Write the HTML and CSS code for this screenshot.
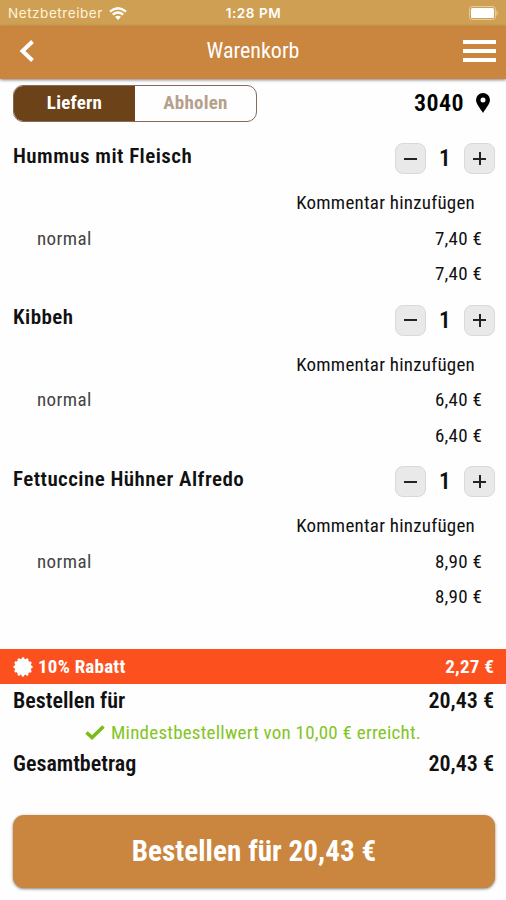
FILE: index.html
```html
<!DOCTYPE html>
<html lang="de">
<head>
    <meta charset="UTF-8">
    <title>Warenkorb</title>
    <link rel="stylesheet" href="styles.css">
</head>
<body>
    <!-- Status bar -->
    <div class="status-bar">
        <div class="carrier">
            <span>Netzbetreiber</span>
            <svg class="wifi" viewBox="0 0 18 13">
                <path d="M1 4.6 Q9 -2 17 4.6" />
                <path d="M3.8 7.6 Q9 3.4 14.2 7.6" />
                <path class="wifi-dot" d="M6 9.7 Q9 7.7 12 9.7 L9 13 Z" />
            </svg>
        </div>
        <div class="time">1:28 PM</div>
        <svg class="battery" viewBox="0 0 30 14">
            <rect class="battery-shell" x="0.5" y="0.5" width="26" height="13" rx="3" />
            <rect class="battery-level" x="2" y="2" width="23" height="10" rx="1.5" />
            <path class="battery-tip" d="M27.5 4 Q30 7 27.5 10 Z" />
        </svg>
    </div>

    <!-- Header -->
    <header class="header">
        <svg class="back" viewBox="0 0 15 22">
            <path d="M13.5 1.5 L3.5 11 L13.5 20.5" />
        </svg>
        <h1 class="title">Warenkorb</h1>
        <div class="menu">
            <span></span>
            <span></span>
            <span></span>
        </div>
    </header>

    <!-- Delivery or pickup -->
    <div class="delivery">
        <div class="switch">
            <div class="switch-option active">Liefern</div>
            <div class="switch-option">Abholen</div>
        </div>
        <div class="location">
            <span>3040</span>
            <svg class="pin" viewBox="0 0 14 20">
                <path fill-rule="evenodd" d="M7 0 A7 7 0 0 1 14 7 C14 11 9.5 15.5 7 20 C4.5 15.5 0 11 0 7 A7 7 0 0 1 7 0 Z M7 4.5 A2.5 2.5 0 1 0 7 9.5 A2.5 2.5 0 1 0 7 4.5 Z" />
            </svg>
        </div>
    </div>

    <!-- Cart items -->
    <div class="items">
        <div class="item">
            <div class="item-head">
                <div class="item-name">Hummus mit Fleisch</div>
                <div class="stepper">
                    <div class="step minus"></div>
                    <div class="count">1</div>
                    <div class="step plus"></div>
                </div>
            </div>
            <div class="comment">Kommentar hinzufügen</div>
            <div class="line"><span class="option">normal</span><span>7,40 €</span></div>
            <div class="line total"><span>7,40 €</span></div>
        </div>

        <div class="item">
            <div class="item-head">
                <div class="item-name">Kibbeh</div>
                <div class="stepper">
                    <div class="step minus"></div>
                    <div class="count">1</div>
                    <div class="step plus"></div>
                </div>
            </div>
            <div class="comment">Kommentar hinzufügen</div>
            <div class="line"><span class="option">normal</span><span>6,40 €</span></div>
            <div class="line total"><span>6,40 €</span></div>
        </div>

        <div class="item">
            <div class="item-head">
                <div class="item-name">Fettuccine Hühner Alfredo</div>
                <div class="stepper">
                    <div class="step minus"></div>
                    <div class="count">1</div>
                    <div class="step plus"></div>
                </div>
            </div>
            <div class="comment">Kommentar hinzufügen</div>
            <div class="line"><span class="option">normal</span><span>8,90 €</span></div>
            <div class="line total"><span>8,90 €</span></div>
        </div>
    </div>

    <!-- Summary -->
    <div class="discount">
        <svg class="badge" viewBox="0 0 20 20">
            <circle cx="10" cy="10" r="8.3" />
            <circle class="badge-edge" cx="10" cy="10" r="8.3" pathLength="48" />
        </svg>
        <span class="discount-label">10% Rabatt</span>
        <span>2,27 €</span>
    </div>
    <div class="sum"><span>Bestellen für</span><span>20,43 €</span></div>
    <div class="minimum">
        <svg class="check" viewBox="0 0 20 15">
            <path d="M1.5 7.5 L7 12.5 L18.5 1.5" />
        </svg>
        <span>Mindestbestellwert von 10,00 € erreicht.</span>
    </div>
    <div class="sum"><span>Gesamtbetrag</span><span>20,43 €</span></div>

    <div class="order-button">Bestellen für 20,43 €</div>
</body>
</html>
```
FILE: styles.css
```css
body {
    margin: 0;
    height: 900px;
    overflow: hidden;
    background: #fefefe;
    color: #111;
    font-family: "Roboto Condensed", Roboto, sans-serif;
    font-stretch: 75%;
    font-size: 19px;
    letter-spacing: 0.23px;
}

.status-bar {
    display: grid;
    grid-template-columns: 1fr auto 1fr;
    align-items: center;
    height: 26px;
    padding: 0 7px 0 8px;
    background: #cfa053;
    color: #fff;
    font-family: Inter, sans-serif;
    font-stretch: 100%;
    font-size: 13.5px;
    letter-spacing: 0.55px;
}

.carrier {
    display: flex;
    align-items: center;
    gap: 6px;
    color: #fff3dc;
}

.wifi {
    width: 18px;
    height: 13px;
    fill: none;
    stroke: #fff;
    stroke-width: 2.4px;
}

.wifi-dot {
    fill: #fff;
    stroke: none;
}

.time {
    font-weight: 600;
}

.battery {
    width: 30px;
    height: 14px;
    justify-self: end;
}

.battery-shell {
    fill: none;
    stroke: #e6cda2;
}

.battery-level {
    fill: #fff;
}

.battery-tip {
    fill: #e6cda2;
}

.header {
    display: grid;
    grid-template-columns: 1fr auto 1fr;
    align-items: center;
    height: 53px;
    padding: 0 10px 4px 19px;
    box-sizing: border-box;
    background: #ca853e;
    color: #fff;
    box-shadow: 0 1px 3px rgba(0, 0, 0, 0.5);
}

.back {
    width: 15px;
    height: 22px;
    fill: none;
    stroke: #fff;
    stroke-width: 4px;
}

.title {
    margin: 0 9px 0 0;
    font-size: 22px;
    font-weight: 400;
    letter-spacing: 0;
}

.menu {
    display: grid;
    gap: 5px;
    width: 33px;
    justify-self: end;
}

.menu span {
    height: 4px;
    background: #fff;
}

.delivery {
    display: flex;
    justify-content: space-between;
    align-items: center;
    height: 48px;
    padding: 0 16px 0 13px;
}

.switch {
    display: flex;
    box-sizing: border-box;
    width: 244px;
    height: 37px;
    border: 1px solid #85695a;
    border-radius: 10px;
    overflow: hidden;
}

.switch-option {
    flex: 1;
    line-height: 34px;
    text-align: center;
    font-weight: 700;
    color: #b5a08c;
}

.switch-option.active {
    background: #6c4318;
    color: #fff;
}

.location {
    display: flex;
    align-items: center;
    gap: 12px;
    font-size: 24px;
    font-weight: 600;
    letter-spacing: 0.4px;
    color: #000;
}

.pin {
    width: 14px;
    height: 20px;
    margin-top: -1px;
}

.items {
    height: 510.5px;
    padding-top: 11.5px;
}

.item {
    height: 161.5px;
}

.item-head {
    display: flex;
    justify-content: space-between;
    height: 46.5px;
    padding: 0 11px 0 13px;
}

.item-name {
    line-height: 35px;
    font-size: 21px;
    font-weight: 600;
    letter-spacing: 0.45px;
}

.stepper {
    display: flex;
    align-items: center;
    height: 40px;
}

.step {
    display: grid;
    place-items: center;
    box-sizing: border-box;
    width: 31px;
    height: 31px;
    border: 1px solid #d9d9d9;
    border-radius: 8px;
    background: #e9e9e9;
}

.step::before,
.step.plus::after {
    content: "";
    grid-area: 1 / 1;
    width: 13px;
    height: 2px;
    background: #222;
}

.step.plus::after {
    width: 2px;
    height: 13px;
}

.count {
    width: 38px;
    text-align: center;
    font-size: 23px;
    font-weight: 600;
}

.comment {
    height: 35.5px;
    padding-right: 31px;
    line-height: 35px;
    text-align: right;
}

.line {
    display: flex;
    justify-content: space-between;
    height: 35.5px;
    padding: 0 24px 0 37px;
    line-height: 35px;
}

.line.total {
    justify-content: flex-end;
}

.option {
    color: #444;
    letter-spacing: 0.4px;
}

.discount {
    display: flex;
    align-items: center;
    height: 35px;
    padding: 0 12px 0 13px;
    background: #fc501e;
    color: #fff;
    font-weight: 700;
}

.badge {
    width: 20px;
    height: 20px;
    margin-right: 5px;
    fill: #fff;
}

.badge-edge {
    fill: none;
    stroke: #fff;
    stroke-width: 2.8px;
    stroke-linecap: round;
    stroke-dasharray: 0.1 3.9;
}

.discount-label {
    flex: 1;
}

.sum {
    display: flex;
    justify-content: space-between;
    height: 33px;
    padding: 0 12px 0 13px;
    line-height: 33px;
    font-size: 22px;
    font-weight: 600;
    letter-spacing: 0;
}

.minimum {
    display: flex;
    justify-content: center;
    align-items: center;
    gap: 6px;
    height: 30px;
    color: #83c51e;
}

.check {
    width: 20px;
    height: 15px;
    fill: none;
    stroke: #77bd15;
    stroke-width: 3.5px;
}

.order-button {
    height: 73px;
    margin: 35px 11px 0 13px;
    border-radius: 11px;
    background: #ca853e;
    box-shadow: 0 1px 3px rgba(0, 0, 0, 0.5);
    color: #fff;
    line-height: 73px;
    text-align: center;
    font-size: 29px;
    font-weight: 700;
    letter-spacing: 0.1px;
}
```
